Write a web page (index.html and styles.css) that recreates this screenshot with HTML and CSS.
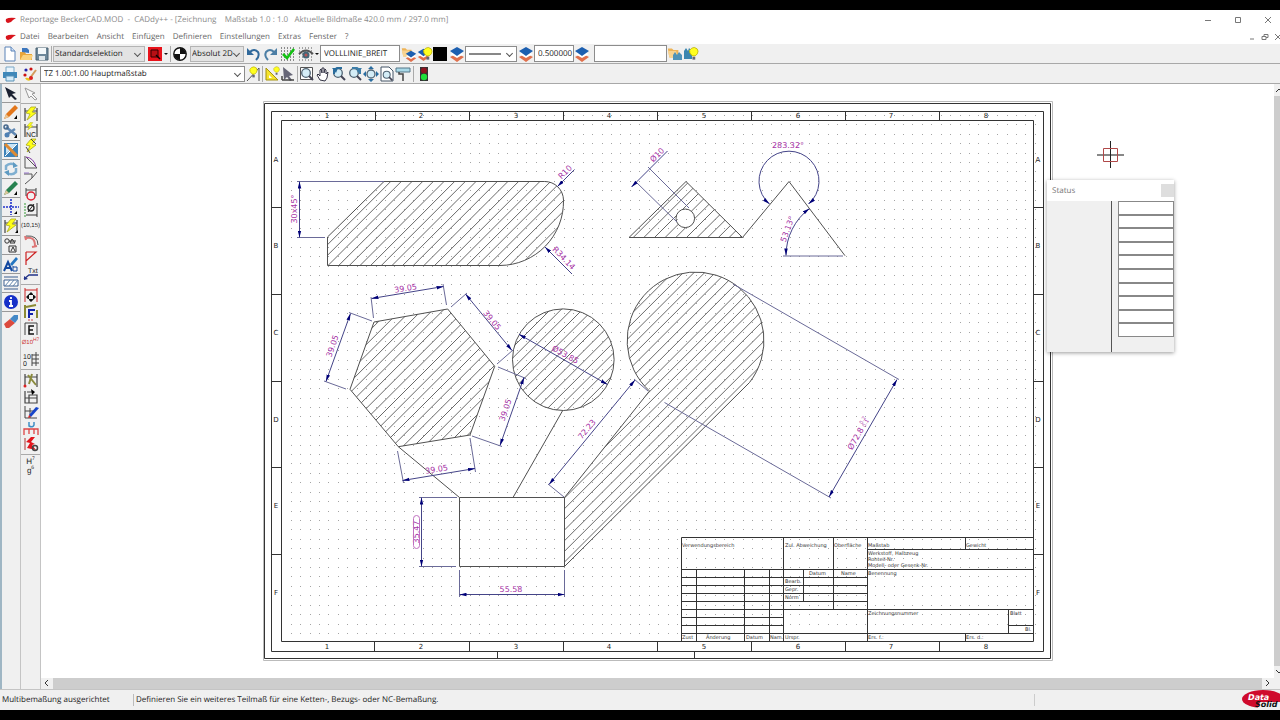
FILE: index.html
```html
<!DOCTYPE html>
<html lang="de">
<head>
<meta charset="utf-8">
<title>Reportage BeckerCAD.MOD - CADdy++</title>
<link rel="stylesheet" href="styles.css">
</head>
<body>
<svg class="defs" aria-hidden="true">
  <symbol id="brand" viewBox="0 0 12 8"><path d="M1 3Q4 1 11 2L8 4Q6 7 3 7Q0 6 1 3Z" fill="#d8141c"/></symbol>
  <symbol id="layers" viewBox="0 0 16 16"><path d="M1 11l4-2 3 2 3-2 4 2-7 5z" fill="#e0704c"/><path d="M1 8l3-1 4 2 4-2 3 1-7 4z" fill="#fff"/><path d="M1 5l7-4 7 4-7 5z" fill="#1c5fb0"/></symbol>
  <symbol id="bulb" viewBox="0 0 16 16"><path d="M9 10Q5 7 6 4Q8 1 11 1Q15 2 15 5Q15 8 12 10z" fill="#ffff20" stroke="#b5a800" stroke-width=".8"/><path d="M9 11h3v3h-3z" fill="#667"/></symbol>
  <symbol id="folder" viewBox="0 0 16 16"><path d="M1 3h5l2 2h6v9H3z" fill="#eeb458"/><path d="M3 14L1 6h10l3 8z" fill="#f8d391"/></symbol>
  <symbol id="bolt" viewBox="0 0 16 16"><path d="M8 1L3 7l4 1-3 6 9-7-4-1 4-5z" fill="#ffff18" stroke="#a8a820" stroke-width=".8"/></symbol>
  <symbol id="gauge" viewBox="0 0 16 16"><path d="M2 2v13M14 2v13M2 5h12" fill="none" stroke="#444" stroke-width="1.2"/></symbol>
  <symbol id="glass" viewBox="0 0 16 16"><circle cx="7" cy="7" r="4.3" fill="#d4edf7" stroke="#506474" stroke-width="1.3"/><path d="M10 10l4 4" stroke="#445" stroke-width="2"/></symbol>
</svg>
<div class="app">
  <header class="titlebar">
    <svg class="brand"><use href="#brand"/></svg>
    <h1 class="title">Reportage BeckerCAD.MOD&nbsp; -&nbsp; CADdy++ - [Zeichnung&nbsp;&nbsp;&nbsp; Maßstab 1.0 : 1.0&nbsp;&nbsp; Aktuelle Bildmaße 420.0 mm / 297.0 mm]</h1>
    <div class="win-buttons">
      <button type="button" aria-label="Minimieren"><svg viewBox="0 0 10 10"><path d="M2 5.500h6"/></svg></button>
      <button type="button" aria-label="Maximieren"><svg viewBox="0 0 10 10"><path d="M2.500 2.500h5v5h-5z"/></svg></button>
      <button type="button" aria-label="Schließen"><svg viewBox="0 0 10 10"><path d="M2 2l6 6M8 2l-6 6"/></svg></button>
    </div>
  </header>
  <nav class="menubar">
    <svg class="brand"><use href="#brand"/></svg>
    <button type="button">Datei</button><button type="button">Bearbeiten</button><button type="button">Ansicht</button><button type="button">Einfügen</button><button type="button">Definieren</button><button type="button">Einstellungen</button><button type="button">Extras</button><button type="button">Fenster</button><button type="button">?</button>
    <div class="doc-buttons">
      <button type="button" aria-label="Dokument minimieren"><svg viewBox="0 0 10 10"><path d="M3 7h4"/></svg></button>
      <button type="button" aria-label="Dokument wiederherstellen"><svg viewBox="0 0 10 10"><path d="M2 4.500h4v3h-4zM4 4V2.500h4v3H6"/></svg></button>
      <button type="button" aria-label="Dokument schließen"><svg viewBox="0 0 10 10"><path d="M2 2l6 6M8 2l-6 6"/></svg></button>
    </div>
  </nav>

  <div class="toolbar" role="toolbar" aria-label="Standard">
    <button class="tool" type="button" aria-label="Neu"><svg viewBox="0 0 16 16"><path d="M3 1h6l4 4v10H3z" fill="#fff" stroke="#5b83b8"/><path d="M9 1v4h4" fill="#cfe0f5" stroke="#5b83b8"/></svg></button>
    <button class="tool" type="button" aria-label="Öffnen"><svg viewBox="0 0 16 16"><path d="M2 6h5l1 2h6v6H2z" fill="#e9a63a"/><path d="M2 14l3-5h10l-2 5z" fill="#fbd27c"/><path d="M4 6V2h5l2 2v3" fill="#3d77bd"/></svg></button>
    <button class="tool" type="button" aria-label="Speichern"><svg viewBox="0 0 16 16"><path d="M2 2h12v12H2z" fill="#6d8799" stroke="#4b6272"/><path d="M4 2h8v6H4z" fill="#f4f8fa"/><path d="M5 10h6v4H5z" fill="#dfe6ea"/></svg></button>
    <span class="sep"></span>
    <span class="combo combo-flat w-92"><select aria-label="Selektion"><option>Standardselektion</option></select></span>
    <button class="tool gap-2" type="button" aria-label="Auswahlfarbe"><svg viewBox="0 0 16 16"><path d="M1 1h14v14H1z" fill="#e8121a"/><path d="M4 4h7v7H4z" fill="#b80f14" stroke="#300"/><path d="M9 9l4 4" stroke="#100" stroke-width="1.500"/></svg></button>
    <span class="caret"></span>
    <span class="sep"></span>
    <button class="tool" type="button" aria-label="Koordinaten"><svg viewBox="0 0 16 16"><circle cx="8" cy="8" r="6.200" fill="#fff" stroke="#111" stroke-width="1.400"/><path d="M8 8V2A6 6 0 0 1 14 8zM8 8v6A6 6 0 0 1 2 8z" fill="#111"/></svg></button>
    <span class="combo combo-flat w-54 gap-2"><select aria-label="Koordinatenmodus"><option>Absolut 2D</option></select></span>
    <button class="tool gap-2" type="button" aria-label="Rückgängig"><svg viewBox="0 0 16 16"><path d="M4 6Q8 2 12 6Q14 10 10 14" fill="none" stroke="#31699b" stroke-width="2"/><path d="M1 2v7h7z" fill="#31699b"/></svg></button>
    <button class="tool" type="button" aria-label="Wiederholen"><svg viewBox="0 0 16 16"><path d="M12 6Q8 2 4 6Q2 10 6 14" fill="none" stroke="#4d7fa5" stroke-width="2"/><path d="M15 2v7H8z" fill="#4d7fa5"/></svg></button>
    <button class="tool gap-2" type="button" aria-label="Raster fangen"><svg viewBox="0 0 16 16"><path d="M1 2h15M1 5h15M1 8h15M1 11h15M1 14h15" stroke="#222" stroke-dasharray="1 2"/><path d="M3 8l4 4 7-9" fill="none" stroke="#13c213" stroke-width="2.600"/></svg></button>
    <button class="tool gap-2" type="button" aria-label="Raster anzeigen"><svg viewBox="0 0 16 16"><path d="M1 2h15M1 5h15M1 8h15M1 11h15M1 14h15" stroke="#555" stroke-dasharray="1 2"/><path d="M1 8Q8 1 15 8" fill="none" stroke="#555" stroke-width="2"/><circle cx="8" cy="9" r="3.500" fill="#467"/><circle cx="8" cy="9" r="1.500" fill="#b55"/></svg></button>
    <span class="caret"></span>
    <input class="field w-80" type="text" aria-label="Linienstil" value="VOLLLINIE_BREIT">
    <button class="tool gap-1" type="button" aria-label="Layer öffnen"><svg viewBox="0 0 16 16"><use href="#folder" width="12" height="12"/><use href="#layers" x="4" y="4" width="12" height="12"/></svg></button>
    <button class="tool" type="button" aria-label="Layer sichtbar"><svg viewBox="0 0 16 16"><use href="#layers" y="1" width="13" height="15"/><use href="#bulb" x="1" width="15" height="16"/></svg></button>
    <button class="swatch" type="button" aria-label="Farbe"></button>
    <button class="tool gap-2" type="button" aria-label="Layer Farbe"><svg viewBox="0 0 16 16"><use href="#layers"/></svg></button>
    <span class="combo w-52"><select aria-label="Linienart"><option></option></select><svg class="line-sample" viewBox="0 0 32 2"><path d="M0 1h32"/></svg></span>
    <button class="tool gap-1" type="button" aria-label="Layer Linienart"><svg viewBox="0 0 16 16"><use href="#layers"/></svg></button>
    <input class="field w-40" type="text" aria-label="Linienbreite" value="0.500000">
    <button class="tool" type="button" aria-label="Layer Linienbreite"><svg viewBox="0 0 16 16"><use href="#layers"/></svg></button>
    <input class="field w-72 gap-4" type="text" aria-label="Gruppe" value="">
    <button class="tool" type="button" aria-label="Gruppe öffnen"><svg viewBox="0 0 16 16"><use href="#folder" width="13" height="13"/><path d="M6 14V9l2-3 2 3 2-3 3 3v5z" fill="#4f93b8"/></svg></button>
    <button class="tool" type="button" aria-label="Gruppe sichtbar"><svg viewBox="0 0 16 16"><path d="M1 13V5l2-3 2 3 1-3 3 3v8z" fill="#3b86b0"/><use href="#bulb" x="1" width="15" height="16"/></svg></button>
  </div>

  <div class="toolbar" role="toolbar" aria-label="Ansicht">
    <button class="tool" type="button" aria-label="Drucken"><svg viewBox="0 0 16 16"><path d="M4 1h8v6H4z" fill="#e9f4fb" stroke="#7ba7c7"/><path d="M1 6h14v6H1z" fill="#3f88b9"/><path d="M4 10h8v5H4z" fill="#d4ebf8" stroke="#5990b5"/></svg></button>
    <button class="tool gap-4" type="button" aria-label="Farben"><svg viewBox="0 0 16 16"><circle cx="4" cy="4" r="1.600" fill="#22a"/><circle cx="9" cy="3" r="1.600" fill="#c11"/><circle cx="3" cy="9" r="1.600" fill="#c11"/><path d="M3 12q4-1 6 2q-4 2-6-2z" fill="#e8c420"/><path d="M8 12l6-8" stroke="#d39b5c" stroke-width="2"/><circle cx="9" cy="12" r="2" fill="#d22"/></svg></button>
    <span class="combo w-204 gap-2"><select aria-label="Teilzeichnung"><option>TZ 1.00:1.00 Hauptmaßstab</option></select></span>
    <button class="tool" type="button" aria-label="Hilfslinien"><svg viewBox="0 0 16 16"><path d="M2 15L14 2v13" fill="none" stroke="#555"/><use href="#bulb" width="13" height="13"/></svg></button>
    <span class="sep"></span>
    <button class="tool" type="button" aria-label="Geodreieck"><svg viewBox="0 0 16 16"><path d="M2 2v12h12z" fill="#f5e32c" stroke="#a59210"/><path d="M5 9v3h3z" fill="#fff"/><use href="#bulb" x="6" width="10" height="10"/></svg></button>
    <button class="tool" type="button" aria-label="Einrasten"><svg viewBox="0 0 16 16"><path d="M3 1l10 8-4 1 3 4-2 1-3-4-3 3z" fill="#667"/><path d="M2 14h12M2 14v-4" stroke="#444" stroke-width="1.500"/></svg></button>
    <span class="sep"></span>
    <button class="tool" type="button" aria-label="Zoom Fenster"><svg viewBox="0 0 16 16"><path d="M1.500 1.500h12v12h-12z" fill="#fff" stroke="#555"/><use href="#glass"/></svg></button>
    <button class="tool" type="button" aria-label="Verschieben"><svg viewBox="0 0 16 16"><path d="M5 14L2 9l1-1 2 2V4l1-1 1 4V2h2v5l1-4 1 1v4l2-2-1 6-2 3z" fill="#fff" stroke="#334"/></svg></button>
    <button class="tool" type="button" aria-label="Zoom zurück"><svg viewBox="0 0 16 16"><use href="#glass"/><path d="M3 8V4l3-2h5" fill="none" stroke="#296c9c" stroke-width="2"/><path d="M1 2l6 0-2 5z" fill="#296c9c"/></svg></button>
    <button class="tool" type="button" aria-label="Zoom vor"><svg viewBox="0 0 16 16"><use href="#glass"/><path d="M13 8V4l-3-2H5" fill="none" stroke="#3c7da8" stroke-width="2"/><path d="M15 2L9 2l2 5z" fill="#3c7da8"/></svg></button>
    <button class="tool" type="button" aria-label="Alles zeigen"><svg viewBox="0 0 16 16"><path d="M8 0l3 3H5zM8 16l3-3H5zM0 8l3-3v6zM16 8l-3-3v6z" fill="#296ca0"/><circle cx="8" cy="8" r="4" fill="#d4edf7" stroke="#506474" stroke-width="1.300"/></svg></button>
    <button class="tool" type="button" aria-label="Zoom Blatt"><svg viewBox="0 0 16 16"><path d="M2 1h8l4 4v10H2z" fill="#fff" stroke="#456"/><use href="#glass" x="2" y="3" width="13" height="13"/></svg></button>
    <button class="tool" type="button" aria-label="Neuzeichnen"><svg viewBox="0 0 16 16"><path d="M1 2h14v4H1z" fill="#a9d9e8" stroke="#578"/><path d="M4 6v2h4v7" fill="none" stroke="#444" stroke-width="1.500"/></svg></button>
    <span class="sep gap-2"></span>
    <button class="tool gap-1" type="button" aria-label="Ampel"><svg viewBox="0 0 16 16"><path d="M4 1h8v14H4z" fill="#333"/><circle cx="8" cy="4.500" r="3" fill="#8e1420"/><circle cx="8" cy="11" r="3.200" fill="#1fe03a"/></svg></button>
  </div>

  <main class="workspace">
    <div class="palette palette-a" role="toolbar" aria-label="Werkzeuge">
      <button type="button" aria-label="Auswahl"><svg viewBox="0 0 16 16"><path d="M2 2l11 6-4 1 5 5-2 1-4-4-2 2z" fill="#1a2030"/></svg></button>
      <button type="button" aria-label="Zeichnen"><svg viewBox="0 0 16 16"><path d="M1 15l2-5 9-9 3 3-9 9z" fill="#e2761b"/><path d="M1 15l2-5 3 3z" fill="#e9c492"/><path d="M14 11v4h-3z"/></svg></button>
      <button type="button" aria-label="Bearbeiten"><svg viewBox="0 0 16 16"><path d="M3 4l10 8M3 12l9-6" stroke="#5f87b3" stroke-width="2.500"/><circle cx="3" cy="4" r="2" fill="none" stroke="#46688c" stroke-width="1.500"/><circle cx="4" cy="12" r="2.500" fill="#4d80b4"/><path d="M14 11v4h-3z"/></svg></button>
      <button type="button" aria-label="Trimmen"><svg viewBox="0 0 16 16"><path d="M1 1h14v14H1z" fill="#3e82b8"/><path d="M3 2h11L3 12z" fill="#c9e4f5"/><path d="M2 14L14 2" stroke="#fff"/><path d="M2 2l12 12" stroke="#df8a32" stroke-width="3"/></svg></button>
      <button type="button" aria-label="Aktualisieren"><svg viewBox="0 0 16 16"><path d="M3 9V5q4-4 9-1M13 7v4q-4 4-9 1" fill="none" stroke="#7fafd0" stroke-width="2.500"/><path d="M10 1l5 4-5 2zM6 15l-5-4 5-2z" fill="#5f9bc2"/></svg></button>
      <button type="button" aria-label="Konstruktion"><svg viewBox="0 0 16 16"><path d="M1 15l2-5 9-9 3 3-9 9z" fill="#278250"/><path d="M1 15l2-5 3 3z" fill="#dcc79a"/><path d="M14 11v4h-3z"/></svg></button>
      <button type="button" aria-label="Punkte"><svg viewBox="0 0 16 16"><path d="M0 8h16M8 0v16" stroke="#23c" stroke-width="1.600" stroke-dasharray="2 1"/><path d="M14 12v3h-3z"/></svg></button>
      <button type="button" aria-label="Bemaßung"><svg viewBox="0 0 16 16"><use href="#gauge"/><use href="#bolt"/><path d="M15 12v3h-3z"/></svg></button>
      <button type="button" aria-label="Symbole"><svg viewBox="0 0 16 16"><circle cx="4" cy="4" r="2.200" fill="none" stroke="#333"/><path d="M6 4h7M9 2l-2 4h5zM6 9h7v6H6z" fill="none" stroke="#333"/><path d="M8 14l2-4 2 4" fill="none" stroke="#333"/></svg></button>
      <button type="button" aria-label="Text"><svg viewBox="0 0 16 16"><path d="M1 15L5 6l4 9M3 12h5" fill="none" stroke="#1248a0" stroke-width="2"/><path d="M7 8l6-7 2 2-6 7z" fill="#2475c0"/><path d="M10 10v5h4v-4h-4" fill="none" stroke="#1248a0"/></svg></button>
      <button type="button" aria-label="Schraffur"><svg viewBox="0 0 16 16"><path d="M1 2h14M1 14h14" stroke="#3a5f90"/><path d="M1 5h14v6H1z" fill="#fff" stroke="#3a5f90"/><path d="M2 11l5-6M6 11l5-6M10 11l5-6" stroke="#6688ad"/></svg></button>
      <button type="button" aria-label="Info"><svg viewBox="0 0 16 16"><circle cx="8" cy="8" r="7" fill="#1630c8"/><path d="M8 3v2M6 7h2v5M6 12h4" fill="none" stroke="#fff" stroke-width="1.800"/></svg></button>
      <button type="button" aria-label="Löschen"><svg viewBox="0 0 16 16"><path d="M1 11l6-5 5 4-6 5H3z" fill="#dc4a3d"/><path d="M7 6l4-4h4v4l-3 4z" fill="#4388c7"/></svg></button>
    </div>
    <div class="palette palette-b" role="toolbar" aria-label="Bemaßungsarten">
      <div class="group group-top">
        <button type="button" aria-label="Zeiger"><svg viewBox="0 0 16 16"><path d="M2 2l10 5-3 1 5 5-2 1-4-4-2 2z" fill="#f8f8f8" stroke="#999"/></svg></button>
      </div>
      <div class="group">
        <button type="button" aria-label="Automatisch"><svg viewBox="0 0 16 16"><use href="#gauge"/><use href="#bolt"/></svg></button>
        <button type="button" aria-label="NC-Maß"><svg viewBox="0 0 16 16"><use href="#gauge"/><use href="#bolt" width="14" height="9"/><text class="glyph" x="3" y="15">NC</text></svg></button>
        <button type="button" aria-label="Schnellmaß"><svg viewBox="0 0 16 16"><use href="#bolt"/><path d="M8 1l5 5M3 9l4 6" stroke="#444"/></svg></button>
        <button type="button" aria-label="Winkel"><svg viewBox="0 0 16 16"><path d="M2 2v12h12L3 3" fill="none" stroke="#555"/><path d="M3 3q8 1 10 10" fill="none" stroke="#84a"/></svg></button>
        <button type="button" aria-label="Fase"><svg viewBox="0 0 16 16"><path d="M1 4h8v4L2 14M9 8l5-6" fill="none" stroke="#555"/><path d="M1 3h5" stroke="#97c"/></svg></button>
        <button type="button" aria-label="Durchmesser"><svg viewBox="0 0 16 16"><circle cx="8" cy="10" r="4" fill="none" stroke="#d23" stroke-width="1.500"/><path d="M3 2v8M13 2v8M3 4h10" stroke="#444"/></svg></button>
        <button type="button" aria-label="Durchmesser linear"><svg viewBox="0 0 16 16"><path d="M2 1v14" stroke="#393" stroke-dasharray="2 1"/><path d="M14 1v14M3 13h11" stroke="#333"/><circle cx="8" cy="6" r="3" fill="none" stroke="#222" stroke-width="1.300"/><path d="M5 10l6-8" stroke="#222"/></svg></button>
        <button type="button" aria-label="Koordinate" class="label-tool">(10,15)</button>
        <button type="button" aria-label="Bogenlänge"><svg viewBox="0 0 16 16"><path d="M3 4q9-2 9 8M2 2l1 4M9 13l5-1" fill="none" stroke="#d77" stroke-width="2"/><path d="M3 2q12-1 12 9" fill="none" stroke="#555"/></svg></button>
        <button type="button" aria-label="Radius"><svg viewBox="0 0 16 16"><path d="M3 2v13M3 2h10L3 11" fill="none" stroke="#c22" stroke-width="1.200"/></svg></button>
        <button type="button" aria-label="Hinweistext"><svg viewBox="0 0 16 16"><path d="M1 13l5-4h9" fill="none" stroke="#238" stroke-width="1.300"/><path d="M1 14v-4l4 3z" fill="#238"/><text class="glyph" x="5" y="7">Txt</text></svg></button>
      </div>
      <div class="group">
        <button type="button" aria-label="Maß verschieben"><svg viewBox="0 0 16 16"><path d="M2 1v14M14 1v14M2 3h12" stroke="#c22"/><path d="M8 5l3 3H5zM8 15l3-3H5zM3 10l3-3v6zM13 10l-3-3v6z" fill="#111"/></svg></button>
        <button type="button" aria-label="Maßformat"><svg viewBox="0 0 16 16"><path d="M3 4l10-2M2 2v13M14 7v8" stroke="#8b8a34" stroke-width="2"/><path d="M6 15V7h6M6 11h4" fill="none" stroke="#12a" stroke-width="2"/></svg></button>
        <button type="button" aria-label="Maßeigenschaft"><svg viewBox="0 0 16 16"><path d="M2 4v12M14 4v12M2 4h12" stroke="#444"/><path d="M5 1h6" stroke="#c44" stroke-dasharray="2 1"/><path d="M11 7H6v8h5M6 11h4" fill="none" stroke="#111" stroke-width="1.500"/></svg></button>
        <button type="button" aria-label="Toleranz" class="label-tool label-red">Ø10<sup>H7</sup></button>
        <button type="button" aria-label="Bezugsmaß"><svg viewBox="0 0 16 16"><path d="M9 3v12M13 1v14M9 4h7M9 8h7M9 12h7" stroke="#444"/><text class="glyph" x="0" y="8">10</text><text class="glyph" x="0" y="15">0</text></svg></button>
      </div>
      <div class="group">
        <button type="button" aria-label="Maß ändern"><svg viewBox="0 0 16 16"><use href="#gauge"/><path d="M5 3l8 10M9 2L6 12" stroke="#8a8a3c" stroke-width="2"/><circle cx="2" cy="14" r="1.500" fill="#d22"/></svg></button>
        <button type="button" aria-label="Maß einfügen"><svg viewBox="0 0 16 16"><path d="M2 3v12h12V7H6v8M2 10h12M4 4h6" fill="none" stroke="#444" stroke-width="1.200"/><path d="M8 1l4 3-3 3z"/></svg></button>
        <button type="button" aria-label="Maß löschen"><svg viewBox="0 0 16 16"><path d="M2 2v12h12M2 7h10M7 4v10" fill="none" stroke="#444"/><path d="M6 11l7-8 3 1-8 9z" fill="#1644c8"/><path d="M6 11l2 2-3 1z" fill="#d22"/></svg></button>
        <button type="button" aria-label="Maßkette drehen"><svg viewBox="0 0 16 16"><path d="M1 15V9h14v6M6 9v5M11 9v5" fill="none" stroke="#d44" stroke-width="1.300"/><path d="M6 2v4q4 2 5-1V2" fill="none" stroke="#3f8fc4" stroke-width="1.500"/></svg></button>
        <button type="button" aria-label="Maßoptionen"><svg viewBox="0 0 16 16"><path d="M8 1L3 6l4 1-3 5 9 2-4-5 3-1-4-2 4-5z" fill="#e3151c"/><path d="M2 2v12" stroke="#a33"/><circle cx="12" cy="12" r="2.500" fill="none" stroke="#444" stroke-width="1.500"/></svg></button>
      </div>
      <div class="group">
        <button type="button" aria-label="Passung" class="label-tool label-fit"><span>H<sup>7</sup></span><span>g<sup>6</sup></span></button>
      </div>
    </div>

    <section class="canvas" aria-label="Zeichnung">
      <svg class="sheet" width="1234" height="593" viewBox="40 84 1234 593">
        <defs>
          <marker id="arrow" viewBox="0 0 8 4" refX="8" refY="2" markerWidth="7" markerHeight="4" orient="auto-start-reverse" markerUnits="userSpaceOnUse"><path d="M0 0L8 2L0 4z" fill="#000078"/></marker>
          <clipPath id="cut"><path d="M327.500 265.300V237L384 181.300H544.700A18.800 18.800 0 0 1 563.500 200.100A64 64 0 0 1 500 265.300ZM374 322L447.700 309L494.700 366.300L470 435L398.300 446.700L350 389.300ZM512.500 359.700a50.800 50.800 0 1 0 101.600 0a50.800 50.800 0 1 0 -101.600 0ZM649.500 391A68.400 68.400 0 1 1 749.500 382.500L564.300 566.300V497.500Z"/></clipPath>
          <clipPath id="cut-tri"><path clip-rule="evenodd" d="M629.300 237L686 181.500L742.300 237ZM676 218.300a9.300 9.300 0 1 0 18.600 0a9.300 9.300 0 1 0 -18.600 0Z"/></clipPath>
        </defs>
        <path id="dots" class="dots"/>
        <g class="frame">
          <path class="frame-soft" d="M263.500 101.500H1052.500V660.500H263.500Z"/>
          <path d="M264.500 103.500H1050.500V658.500H264.500ZM271.500 111.500H1043.500V651.500H271.500ZM281.500 120.500H1033.500V641.500H281.500Z"/>
          <path d="M375.500 111V120M469.500 111V120M563.500 111V120M657.500 111V120M751.500 111V120M845.500 111V120M939.500 111V120M374.500 642V651M469.500 642V651M563.500 642V651M657.500 642V651M751.500 642V651M845.500 642V651M939.500 642V651M497.500 651V658M694.500 651V658"/>
          <path d="M271 207.500H281M271 294.500H281M271 381.500H281M271 467.500H281M271 554.500H281M1034 207.500H1043M1034 294.500H1043M1034 381.500H1043M1034 467.500H1043M1034 554.500H1043"/>
        </g>
        <g class="zone">
          <text x="327" y="118">1</text><text x="421" y="118">2</text><text x="516" y="118">3</text><text x="609" y="118">4</text><text x="704" y="118">5</text><text x="798" y="118">6</text><text x="891" y="118">7</text><text x="986" y="118">8</text>
          <text x="327" y="649">1</text><text x="421" y="649">2</text><text x="516" y="649">3</text><text x="609" y="649">4</text><text x="704" y="649">5</text><text x="798" y="649">6</text><text x="891" y="649">7</text><text x="986" y="649">8</text>
          <text x="276" y="162">A</text><text x="276" y="248">B</text><text x="276" y="335">C</text><text x="276" y="422">D</text><text x="276" y="508">E</text><text x="276" y="595">F</text>
          <text x="1038" y="162">A</text><text x="1038" y="248">B</text><text x="1038" y="335">C</text><text x="1038" y="422">D</text><text x="1038" y="508">E</text><text x="1038" y="595">F</text>
        </g>

        <g clip-path="url(#cut)"><path class="hatch"/></g>
        <g clip-path="url(#cut-tri)"><path class="hatch"/></g>

        <g class="part">
          <path d="M327.500 265.500V237L384 181.500H544.700A18.800 18.800 0 0 1 563.500 200.100A64 64 0 0 1 500 265.500Z"/>
          <path d="M629 237.500L686 181.500L742.500 237.500ZM742.500 237.500L789 181.500L845 255.700"/>
          <circle cx="685.300" cy="218.300" r="9.300"/>
          <path d="M374 322L447.700 309L494.700 366.300L470 435L398.300 446.700L350 389.300ZM398.300 446.700L459.500 497.500M562.700 410.500L513 497.500"/>
          <circle cx="563.300" cy="359.700" r="50.800"/>
          <path d="M459.500 497.500H564.500V566.500H459.500Z"/>
          <path d="M564.500 497.500L649.500 391A68.400 68.400 0 1 1 749.500 382.500L564.500 566.500"/>
        </g>

        <g class="ext">
          <path d="M297 181.500H384M297 237.500H325M648 167L689 208M635 181L677 222M783 256H843"/>
          <path d="M373.500 318L371 297M446.500 305L443 284M451 307L467 293M497 364L513 350M498 367L526 378.500M472 436L502 446.500M372 321L349 312.500M346 389L324 381M397.500 451L403.500 483M470 438L475.500 472"/>
          <path d="M564 497L548 484M648 391L634 379M733 284L899 379.500M664.500 402.500L831 498M419 497.500H457M419 566.500H456M459.500 570V597M564.500 570V597"/>
        </g>
        <g class="dim">
          <path d="M299.500 181.500V237.500"/>
          <path d="M371.500 298.500L443.500 286.500"/>
          <path d="M465.500 294L512 350.500"/>
          <path d="M524 377.500L500 445.500"/>
          <path d="M350.500 313.500L326 381.500"/>
          <path d="M402.500 480.500L475 468.500"/>
          <path d="M519 334.300L607.500 384.500"/>
          <path d="M635 380L549 484.500"/>
          <path d="M897 379.500L829 497"/>
          <path d="M421.500 497.500V566.500"/>
          <path d="M459.500 594.500H564.500"/>
          <path d="M769.500 204A30 30 0 1 1 808.500 204"/>
          <path d="M786 255.500A59 59 0 0 1 809.500 208.500"/>
        </g>
        <g class="dim single">
          <path d="M574.500 169.500L557.500 186.500"/>
          <path d="M572 274L545 247"/>
          <path d="M667.500 151L649 169.500L631.500 187"/>
        </g>
        <g class="measure">
          <text transform="translate(297 209) rotate(-90)">30x45°</text>
          <text transform="translate(567 174) rotate(-45)">R10</text>
          <text transform="translate(562 260) rotate(46)">R34.14</text>
          <text transform="translate(659 157) rotate(-45)">Ø10</text>
          <text x="788" y="148">283.32°</text>
          <text transform="translate(790 230) rotate(-70)">53.13°</text>
          <text transform="translate(406 291) rotate(-9)">39.05</text>
          <text transform="translate(490 322) rotate(50)">39.05</text>
          <text transform="translate(508 411) rotate(-71)">39.05</text>
          <text transform="translate(335 347) rotate(-71)">39.05</text>
          <text transform="translate(437 472) rotate(-9)">39.05</text>
          <text transform="translate(564 357) rotate(29)">Ø53.85</text>
          <text transform="translate(589 431) rotate(-50)">72.23</text>
          <text transform="translate(858 440) rotate(-60)">Ø72.8</text>
          <text class="tiny" transform="translate(864 421) rotate(-60)">0.2</text>
          <text class="tiny" transform="translate(867 424) rotate(-60)">0.1</text>
          <text transform="translate(419 532) rotate(-90)">35.47</text>
          <text x="511" y="592">55.58</text>
          <rect x="413.500" y="515.500" width="6" height="33" rx="3"/>
        </g>

        <g class="frame">
          <path d="M681.500 641V537.500H1033M867 549.500H1033M681 569.500H1033M681 577.500H867M681 585.500H867M681 593.500H867M681 601.500H867M681 609.500H1033M681 617.500H783M681 625.500H783M1009 625.500H1033M681 633.500H1033"/>
          <path d="M696.500 569V641M744.500 569V641M769.500 569V641M783.500 537V641M803.500 569V601M833.500 537V609M867.500 537V641M965.500 537V549M965.500 633V641M1008.500 609V633"/>
        </g>
        <g class="block">
          <text x="682" y="547">Verwendungsbereich</text><text x="785" y="547">Zul. Abweichung</text><text x="834" y="547">Oberfläche</text><text x="868" y="547">Maßstab</text><text x="966" y="547">Gewicht</text>
          <text x="868" y="555">Werkstoff, Halbzeug</text><text x="868" y="561">Rohteil-Nr.</text><text x="868" y="567">Modell- oder Gesenk-Nr.</text>
          <text x="809" y="575">Datum</text><text x="841" y="575">Name</text><text x="868" y="575">Benennung</text>
          <text x="785" y="583">Bearb.</text><text x="785" y="591">Gepr.</text><text x="785" y="599">Norm</text>
          <text x="868" y="615">Zeichnungsnummer</text><text x="1010" y="615">Blatt</text><text x="1025" y="631">Bl.</text>
          <text x="682" y="639">Zust</text><text x="706" y="639">Änderung</text><text x="746" y="639">Datum</text><text x="770" y="639">Nam.</text><text x="785" y="639">Urspr.</text><text x="868" y="639">Ers. f.:</text><text x="966" y="639">Ers. d.:</text>
        </g>

        <path d="M1097 155H1124" stroke="#888" stroke-width="2"/>
        <path d="M1110.500 141V168" stroke="#222"/>
        <path d="M1103.500 148.500H1117.500V161.500H1103.500Z" fill="none" stroke="#b04848"/>
      </svg>

      <aside class="status-window">
        <div class="status-head"><h2>Status</h2><button type="button" aria-label="Statusfenster schließen"></button></div>
        <div class="status-body">
          <div class="status-labels"></div>
          <div class="status-fields">
            <input type="text" aria-label="Wert 1"><input type="text" aria-label="Wert 2"><input type="text" aria-label="Wert 3"><input type="text" aria-label="Wert 4"><input type="text" aria-label="Wert 5"><input type="text" aria-label="Wert 6"><input type="text" aria-label="Wert 7"><input type="text" aria-label="Wert 8"><input type="text" aria-label="Wert 9"><input type="text" aria-label="Wert 10">
          </div>
        </div>
      </aside>
    </section>
    <div class="vscroll"><svg viewBox="0 0 8 12"><path d="M2 8l3-3 3 3"/></svg><span class="thumb"></span><svg viewBox="0 0 8 12"><path d="M2 4l3 3 3-3"/></svg></div>
    <div class="hscroll"><svg viewBox="0 0 12 10"><path d="M7 2L4 5l3 3"/></svg><span class="thumb"></span><svg viewBox="0 0 12 10"><path d="M4 2l3 3-3 3"/></svg></div>
  </main>

  <footer class="statusbar">
    <span class="mode">Multibemaßung ausgerichtet</span>
    <span class="hint">Definieren Sie ein weiteres Teilmaß für eine Ketten-, Bezugs- oder NC-Bemaßung.</span>
    <svg class="logo" viewBox="0 0 40 20" role="img" aria-label="Data Solid"><ellipse cx="23" cy="9" rx="21" ry="9" fill="#cf0a2c"/><path d="M17 20L20 12H40V20Z" fill="#f0f0f0"/><text x="8" y="10" fill="#fff">Data</text><text class="solid" x="15" y="17">Solid</text></svg>
  </footer>
</div>
<script src="drawing.js"></script>
</body>
</html>
```
FILE: styles.css
```css
* { box-sizing: border-box; }
body {
  margin: 0;
  height: 100vh;
  background: #000;
  font: 8px/12px "Open Sans", "Noto Sans", sans-serif;
  text-rendering: geometricPrecision;
  color: #222;
}
button, input, select { font: inherit; color: inherit; margin: 0; padding: 0; border: 0; background: none; border-radius: 0; text-rendering: inherit; }
h1, h2 { margin: 0; font: inherit; }
svg { display: block; }
.defs { position: absolute; width: 0; height: 0; }

.app {
  display: flex;
  flex-direction: column;
  height: 100vh;
  border-top: 10px solid #000;
  border-bottom: 10px solid #000;
  background: #fff;
  overflow: hidden;
}
.titlebar, .menubar { display: flex; align-items: center; flex: none; padding-left: 5px; overflow: hidden; }
.titlebar { height: 20px; color: #8a8a8a; }
.menubar { height: 14px; color: #666; }
.brand { width: 12px; height: 8px; margin-right: 3px; }
.title { white-space: pre; }
.win-buttons, .doc-buttons { display: flex; margin-left: auto; }
.win-buttons button { width: 30px; }
.win-buttons { margin-right: -3px; }
.doc-buttons button { width: 13px; }
.doc-buttons { margin-right: -4px; }
.win-buttons svg, .doc-buttons svg { width: 10px; height: 10px; margin: auto; fill: none; stroke: #777; }
.menubar > button { margin-right: 8px; }

.toolbar {
  display: flex;
  align-items: center;
  flex: none;
  height: 20px;
  padding-left: 2px;
  background: #f0f0f0;
  border-bottom: 1px solid #a8a8a8;
}
.tool { flex: none; width: 16px; height: 16px; }
.tool svg { width: 16px; height: 16px; }
.sep { flex: none; width: 1px; height: 16px; margin: 0 1px; background: #aaa; }
.gap-1 { margin-left: 1px; }
.gap-2 { margin-left: 2px; }
.gap-4 { margin-left: 4px; }
.caret { flex: none; margin: 0 1px; border: 2px solid transparent; border-top-color: #111; border-bottom: 0; }
.combo { position: relative; flex: none; height: 16px; background: #fff; border: 1px solid #8c8c8c; }
.combo select { appearance: none; display: block; width: 100%; height: 14px; padding-left: 3px; outline: 0; }
.combo-flat select { padding-left: 1px; }
.combo::after {
  content: "";
  position: absolute;
  right: 4px;
  top: 4px;
  width: 4px;
  height: 4px;
  border: solid #555;
  border-width: 0 1px 1px 0;
  transform: rotate(45deg);
  pointer-events: none;
}
.combo-flat { background: #e3e3e3; border-color: #b4b4b4; }
.line-sample { position: absolute; left: 3px; top: 6px; width: 32px; height: 2px; stroke: #111; pointer-events: none; }
.field { flex: none; height: 17px; padding-left: 3px; background: #fff; border: 1px solid #8c8c8c; }
.w-40 { width: 40px; }
.w-52 { width: 52px; }
.w-54 { width: 54px; }
.w-72 { width: 73px; }
.w-80 { width: 80px; }
.w-92 { width: 92px; }
.w-204 { width: 205px; }
.swatch { flex: none; width: 14px; height: 14px; background: #000; }

.workspace {
  flex: 1;
  min-height: 0;
  display: grid;
  grid-template-columns: 20px 21px 1fr 6px;
  grid-template-rows: 1fr 11px;
  background: #f0f0f0;
}
.palette { grid-row: 1 / 3; background: #f0f0f0; overflow: hidden; }
.palette button { display: block; width: 16px; height: 16px; margin: 0 auto; }
.palette svg { width: 16px; height: 16px; }
.palette-a { border-left: 2px solid #9fb6c4; }
.palette-a button { width: 100%; height: 19px; padding: 1px 1px 2px; border-bottom: 1px solid #999; }
.palette-a button:last-child { border-bottom-color: transparent; }
.palette-b { border: solid #c4c4c4; border-width: 0 1px; }
.group { padding: 2px 0; border-bottom: 1px solid #aaa; }
.group:last-child { border-bottom: 0; }
.group-top { padding: 2px 0 1px; }
.glyph { font: 7px "Liberation Sans", sans-serif; fill: #222; }
.palette .label-tool { width: 100%; font: 6px/16px "Liberation Sans", sans-serif; white-space: nowrap; }
.palette .label-red { color: #c33; }
.label-tool sup { font-size: 5px; line-height: 5px; }
.palette .label-fit { height: 18px; font-size: 8px; line-height: 9px; }
.label-fit span { display: block; height: 9px; }

.canvas { position: relative; overflow: hidden; background: #fff; }
.sheet { display: block; margin-left: -1px; }
.dots { stroke: #a4a4a4; fill: none; shape-rendering: crispEdges; }
.hatch { stroke: #686868; fill: none; stroke-width: 1; }
.frame { fill: none; stroke: #333; }
.frame-soft { stroke: #bbb; }
.part { fill: none; stroke: #505050; }
.ext { fill: none; stroke: #6a6a98; }
.dim { fill: none; stroke: #444488; }
.dim path { marker-start: url(#arrow); marker-end: url(#arrow); }
.dim.single path { marker-start: none; }
.measure { font: 8px "DejaVu Sans", sans-serif; text-anchor: middle; fill: #a632a6; }
.measure rect { fill: none; stroke: #c070c0; }
.measure .tiny { font-size: 5px; }
.zone { font: 7px "DejaVu Sans", sans-serif; text-anchor: middle; fill: #222; }
.block { font: 5px "DejaVu Sans", sans-serif; fill: #333; }

.status-window {
  position: absolute;
  right: 100px;
  top: 96px;
  width: 127px;
  height: 172px;
  display: flex;
  flex-direction: column;
  background: #f0f0f0;
  box-shadow: 0 1px 4px rgba(0, 0, 0, .4);
}
.status-head { display: flex; justify-content: space-between; align-items: center; height: 21px; padding-left: 5px; background: #fff; color: #777; }
.status-head button { width: 13px; height: 13px; background: #dedede; }
.status-body { flex: 1; display: grid; grid-template-columns: 65px 1fr; }
.status-labels { border-right: 1px solid #555; }
.status-fields { display: grid; grid-template-rows: repeat(10, 1fr); height: 136px; padding-left: 6px; }
.status-fields input { width: 100%; min-width: 0; height: 100%; min-height: 0; background: #fff; border: 1px solid #888; }

.vscroll, .hscroll { display: flex; background: #f0f0f0; overflow: hidden; }
.vscroll { flex-direction: column; }
.hscroll { grid-column: 3; }
.thumb { flex: 1; background: #cdcdcd; }
.vscroll svg { width: 8px; height: 12px; }
.hscroll svg { width: 12px; height: 10px; }
.vscroll svg, .hscroll svg { flex: none; fill: none; stroke: #333; stroke-width: 1; }

.statusbar { display: flex; align-items: center; flex: none; height: 21px; background: #f0f0f0; border-top: 1px solid #c4c4c4; overflow: hidden; }
.mode { flex: none; width: 134px; padding-left: 2px; border-right: 1px solid #bbb; }
.hint { flex: 1; padding-left: 2px; margin-right: 205px; border-right: 1px solid #ccc; white-space: nowrap; }
.logo { flex: none; width: 40px; height: 20px; font: bold italic 8px "DejaVu Sans", sans-serif; }
.solid { fill: #111; }
```
FILE: drawing.js
```js
// Hatch lines at 45 degrees, one shared origin for all sections.
const hatchStep = 10.66;
let hatch = "";
for (let c = 593.5 - 8 * hatchStep; c < 1180; c += hatchStep) {
  hatch += `M${(c - 600).toFixed(1)} 600L${(c - 150).toFixed(1)} 150`;
}
document.querySelectorAll(".hatch").forEach((p) => p.setAttribute("d", hatch));

// Raster points, ten per zone column.
const step = 9.42;
let dots = "";
for (let y = 115.4; y < 641; y += step) {
  for (let x = 281.3; x < 1043; x += step) {
    dots += `M${Math.round(x)} ${Math.floor(y) + 0.5}h1`;
  }
}
document.getElementById("dots").setAttribute("d", dots);
```
